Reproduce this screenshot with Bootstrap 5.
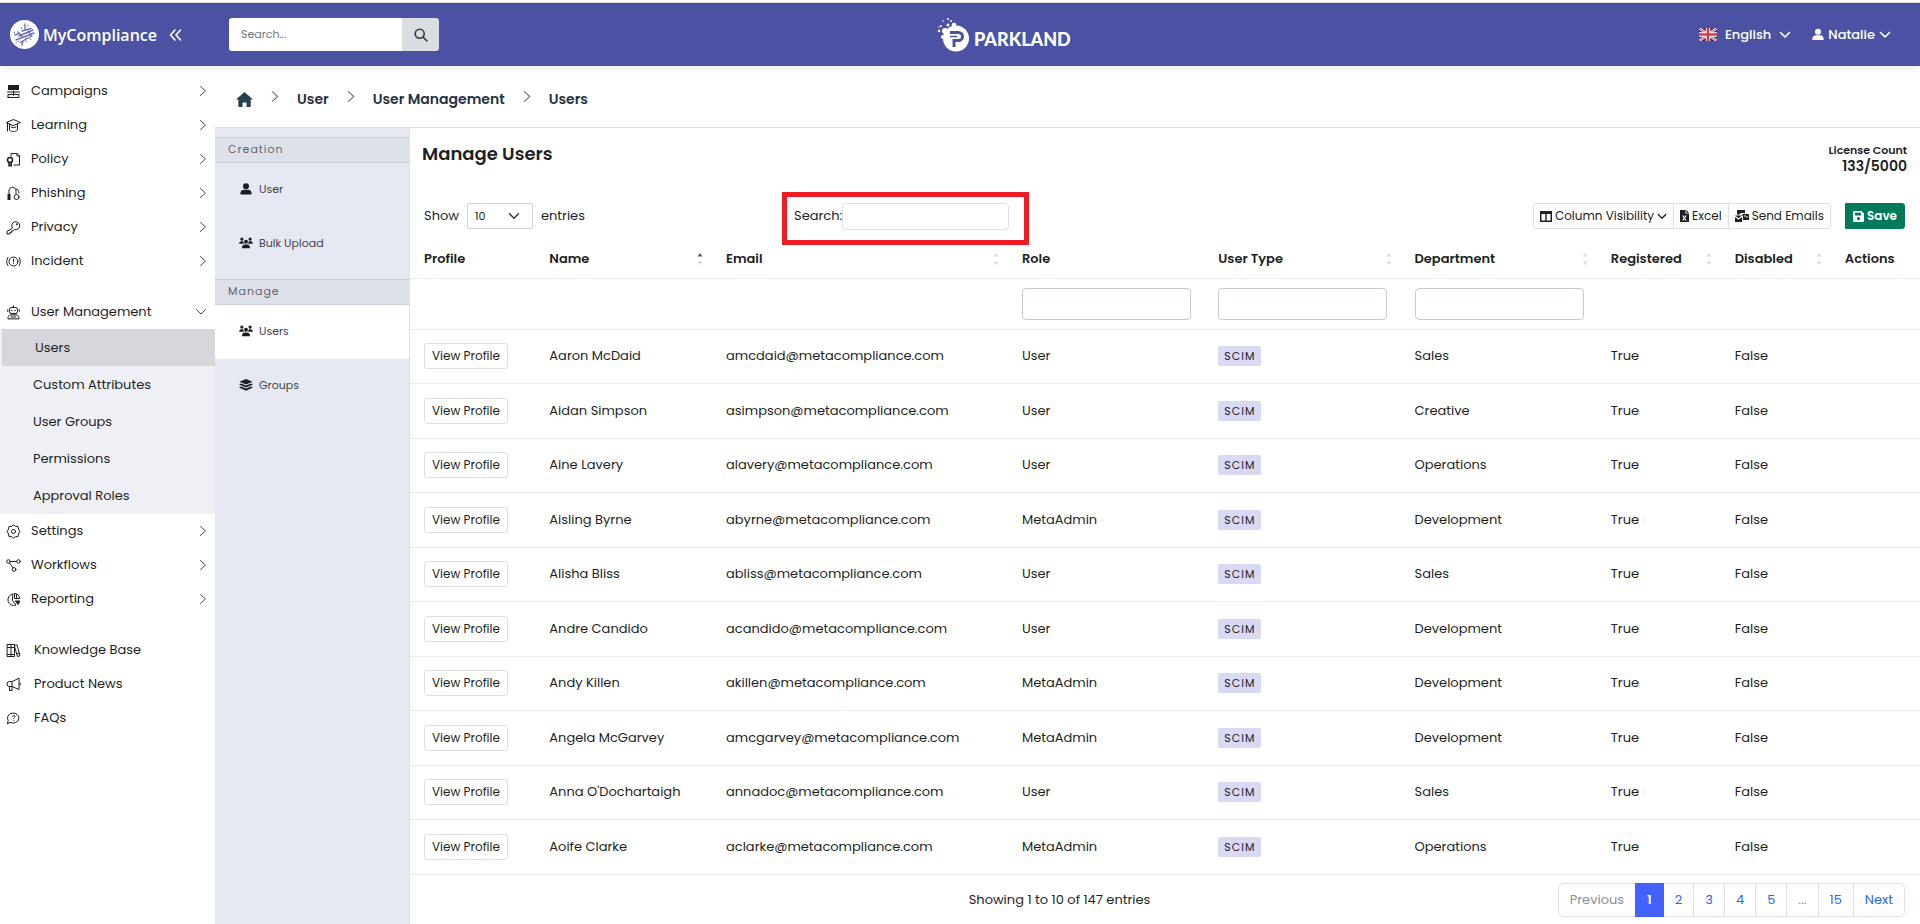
<!DOCTYPE html>
<html lang="en">
<head>
<meta charset="utf-8">
<meta name="viewport" content="width=device-width, initial-scale=1">
<title>Manage Users</title>
<link href="https://cdn.jsdelivr.net/npm/bootstrap@5.3.0/dist/css/bootstrap.min.css" rel="stylesheet">
<style>
body{font-family:Poppins,Inter,"Open Sans",sans-serif;font-size:13px;line-height:20px;color:#1d1f24;background:#fff;border-top:2px solid #fff}
a{color:inherit;text-decoration:none}
svg{display:block;flex:none}
.ln{fill:none;stroke:currentColor;stroke-linecap:round;stroke-linejoin:round}
.topbar{display:grid;grid-template-columns:48.8% auto 1fr;height:64px;background:#4c52a3;border-top:1px solid #dadada;color:#fff;box-shadow:0 2px 8px rgba(0,0,0,.08);position:relative}
.brandname{font-family:"Open Sans",sans-serif;font-size:16px;font-weight:600}
.tophalf{padding-left:10px}
.brandbox{width:219px}
.swirl{color:#6b70b5}
.topsearch{width:210px}
.topsearch .form-control{height:33px;font-size:11px;border:0;padding:0 12px;border-radius:3px}
.topsearch .form-control::placeholder{color:#707680}
.topsearch .btn{height:33px;width:37px;padding:0 12px;background:#dadde1;border:0;border-radius:3px;color:#343a45}
.parkland{font-family:Lato,sans-serif;font-weight:900;font-size:18px}
.topmenu{padding-right:29px;gap:21px}
.topmenu button{border:0;background:none;color:#fff;padding:0;font-weight:500}
.side{width:215px;flex:none;padding-top:8px}
.side a{display:flex;align-items:center;height:34px;padding:0 8px 0 6px}
.side a svg:first-child{width:15px;height:15px;margin-right:10px}
.side .chev{margin-left:auto;color:#4a4f56}
.side .help svg:first-child{margin-right:13px}
.side .subnav{background:#eff0f6}
.side .subnav a{height:37px;padding-left:33px}
.side .subnav a.on{background:#d6d7dd;margin-left:2px}
.gap-above{margin-top:17px}
.crumbs{height:62px;border-bottom:1px solid #dde1ea;padding:5px 0 0 21px;font-size:14px;font-weight:600;color:#26323f}
.crumbs svg.chev{color:#6b7380;margin:0 17px 6px}
.panel{width:195px;flex:none;background:#e6e9f2;border-right:1px solid #dde1ea;padding-top:9px;font-size:11px;color:#3c4148}
.panel h2{margin:0;height:26px;padding:0 13px;font-size:11px;font-weight:400;line-height:22px;letter-spacing:1px;color:#62676e;background:#dde1ea;border:solid #cbd0d8;border-width:1px 0}
.panel a{display:flex;align-items:center;gap:6px;height:54px;padding:0 0 2px 24px}
.panel a svg{color:#1b1d21}
.panel a.on{background:#fff}
.panel .grp{height:116px}
.mainhead{padding:14px 13px 0 12px}
.headline{font-size:18px;font-weight:600;line-height:24px;margin:0}
.licence{font-weight:600;font-size:14px;line-height:16px}
.licence small{font-size:11px;line-height:16px;display:block}
.tools{display:grid;grid-template-columns:372px 1fr auto;align-items:center;height:53px;margin-top:18px}
.tools>.shown,.tools>.actions{padding:0 15px 5px 14px}
.tools .form-select{width:66px;height:26px;font-size:11px;padding:0 7px;border-color:#cfd3dc;border-radius:3px;background-size:12px;background-position:right 12px center}
.marked{border:5px solid #ee1c25;width:247px;height:53px;padding:0 0 5px 7px}
.marked .form-control{width:167px;height:27px;border-color:#dcdfe6;border-radius:4px}
.tools .btn{height:26px;font-size:12px;line-height:16px;padding:0 7px;border:1px solid #dcdfe4;color:#1d1f24;border-radius:3px;display:flex;align-items:center;gap:3px}
.tools .btn-group .btn{padding:0 6px}
.tools .btn.save{background:#007a5a;border-color:#007a5a;color:#fff;font-weight:600;border-radius:0 3px 3px 0;margin-left:14px}
.users{table-layout:fixed;margin:0;color:#1d1f24;--bs-table-bg:transparent;--bs-table-color:#1d1f24}
.users th,.users td{padding:0 0 0 14px;vertical-align:middle;border-bottom:1px solid #ebebee;white-space:nowrap}
.users th{font-weight:600;position:relative}
.users thead tr:first-child{height:33px}
.users thead tr:first-child th{padding-bottom:4px}
.users thead tr+tr{height:51px}
.users tbody tr{height:54px}
.users tbody tr:nth-child(even){height:55px}
.users .form-control{width:169px;height:32px;border-color:#c7c8d2;border-radius:4px}
.users .btn{font-size:12px;line-height:16px;height:26px;padding:0 7px;border:1px solid #dcdfe4;border-radius:3px;color:#1d1f24}
.sorter{position:absolute;right:9px;top:8px;color:#dcdcde}
.tagged{background:#d9d9f3;color:#1f2130;font-size:11px;letter-spacing:1px;line-height:20px;height:20px;padding:0 6px;border-radius:2px;display:inline-block}
.foot{padding:8px 15px 8px 37%}
.pagination{--bs-pagination-color:#2b66f0;margin:0}
.page-link{font-size:13px;line-height:20px;padding:6px 11px;border-color:#dce1ea}
.page-item.active .page-link{background:#4361ff;border-color:#4361ff;font-weight:600;padding:6px 11px}
.page-item.disabled .page-link{background:#fff;color:#8d9094;border-color:#dce1ea}
</style>
</head>
<body>
<svg width="0" height="0" class="position-absolute" aria-hidden="true">
<symbol id="right" viewBox="0 0 8 12"><path class="ln" d="M1.500 1.500 6.500 6 1.500 10.500"/></symbol>
<symbol id="down" viewBox="0 0 12 8"><path class="ln" d="M1.500 1.500 6 6 10.500 1.500" stroke-width="1.600"/></symbol>
<symbol id="downthin" viewBox="0 0 12 8"><path class="ln" d="M1.500 1.500 6 6 10.500 1.500"/></symbol>
<symbol id="sort" viewBox="0 0 6 12"><path fill="currentColor" d="M3 0 5.500 3.500H.500zM3 12 5.500 8.500H.500z"/></symbol>
<symbol id="sortup" viewBox="0 0 6 12"><path fill="#5d6066" d="M3 0 5.500 3.500H.500z"/><path fill="currentColor" d="M3 12 5.500 8.500H.500z"/></symbol>
<symbol id="person" viewBox="0 0 14 14"><circle cx="7" cy="3.700" r="3.500" fill="currentColor"/><path fill="currentColor" d="M.500 13.500v-1.700C.500 9.500 2.300 8 4.500 8h5c2.200 0 4 1.500 4 3.800v1.700z"/></symbol>
<symbol id="people" viewBox="0 0 16 14"><g fill="currentColor"><circle cx="3.200" cy="2.400" r="1.900"/><circle cx="12.800" cy="2.400" r="1.900"/><circle cx="8" cy="5.500" r="2.300"/><path d="M0 8c0-2 1-3 2.600-3h1.800l.6.300C4.800 6.500 5.300 7.400 6 8zM16 8c0-2-1-3-2.600-3h-1.800l-.6.300c.2 1.200-.3 2.100-1 2.700zM3.300 13c0-2.600 1.300-4.200 3.200-4.200h3c1.900 0 3.200 1.600 3.200 4.200z"/></g></symbol>
</svg>

<header class="topbar">
  <div class="tophalf d-flex align-items-center">
    <div class="brandbox d-flex align-items-center">
      <svg class="swirl" width="29" height="29" viewBox="0 0 29 29"><circle cx="14.500" cy="14.500" r="14.500" fill="#fff"/><path class="ln" stroke-width="1.400" d="M15 4v6M12 11l9-2.500M9 16l14-6M6 20l18-7M10 22.500 22 16M8 12l4 4.500M18 11l3 5M13 21l-1 4M5 15l3-1"/><path class="ln" d="M16 18v5M20 19l2 2M11 8l2 2M6 23l3-2M4.500 12v1M18 5v1" stroke-dasharray="1 2"/></svg>
      <span class="brandname ms-1">MyCompliance</span>
      <a href="#" class="ms-2 ps-1" aria-label="Collapse menu"><svg width="13" height="12" viewBox="0 0 13 12"><path class="ln" stroke-width="1.600" d="M6 1 1.500 6 6 11M11.500 1 7 6l4.500 5"/></svg></a>
    </div>
    <form class="input-group topsearch">
      <input class="form-control" type="search" placeholder="Search..." aria-label="Search">
      <button class="btn" type="button" aria-label="Run search"><svg width="14" height="14" viewBox="0 0 14 14"><circle class="ln" cx="5.700" cy="5.700" r="4.500" stroke-width="1.600"/><path class="ln" stroke-width="1.600" d="m9 9 4 4"/></svg></button>
    </form>
  </div>
  <a href="#" class="d-flex align-items-center text-white">
    <svg width="33" height="36" viewBox="0 0 33 36"><circle cx="19" cy="21.500" r="13" fill="#fff"/><path d="M13 15.500h8.500a4 4 0 0 1 0 8H17V30" fill="none" stroke="#4c52a3" stroke-width="3"/><path d="M13 19.500h7" stroke="#4c52a3" stroke-width="1.500"/><g fill="#fff"><circle cx="8" cy="14" r="3"/><circle cx="17" cy="8" r="2.300"/><circle cx="11" cy="8" r="1.500"/><circle cx="6" cy="20" r="2"/><circle cx="2" cy="14" r="1.300"/><circle cx="4" cy="9" r="1"/><circle cx="11" cy="2" r="1"/><circle cx="14" cy="4" r="1"/><circle cx="6" cy="4" r=".8"/><circle cx="2" cy="10" r=".7"/></g></svg>
    <span class="parkland ms-1 pt-2">PARKLAND</span>
  </a>
  <div class="topmenu d-flex align-items-center justify-content-end">
    <button type="button" class="d-flex align-items-center"><svg width="18" height="13" viewBox="0 0 18 13" class="me-2"><path fill="#27366f" d="M0 0h18v13H0z"/><path stroke="#fff" stroke-width="2.600" d="m0 0 18 13M18 0 0 13"/><path stroke="#d7263d" d="m0 0 18 13M18 0 0 13"/><path stroke="#fff" stroke-width="4.500" d="M9 0v13M0 6.500h18"/><path stroke="#d7384c" stroke-width="2.600" d="M9 0v13M0 6.500h18"/></svg>English<svg width="12" height="8" class="ms-2"><use href="#down"/></svg></button>
    <button type="button" class="d-flex align-items-center"><svg width="12" height="13" class="me-1"><use href="#person"/></svg>Natalie<svg width="12" height="8" class="ms-1"><use href="#down"/></svg></button>
  </div>
</header>

<div class="d-flex align-items-stretch">
  <nav class="side" aria-label="Main menu">
    <a href="#"><svg viewBox="0 0 15 15"><path fill="currentColor" d="M2 1h11v5H2z"/><path class="ln" d="M1.500 8h12M2 13.500h11v-3H9.500M2 13.500v-3h3.500M7.500 7v4m-1.500-1 1.500 1.500L9 10"/></svg>Campaigns<svg class="chev" width="8" height="12"><use href="#right"/></svg></a>
    <a href="#"><svg viewBox="0 0 15 15"><path class="ln" d="m.5 4.500 7-3 7 3-7 3zM3.500 6v6c2 2 6 2 8 0V6M1.500 5v8M5 9c1.500 1 3.500 1 5 0"/></svg>Learning<svg class="chev" width="8" height="12"><use href="#right"/></svg></a>
    <a href="#"><svg viewBox="0 0 15 15"><path class="ln" d="M5 4V1.500h6l2.500 2.500v9H8M11 1.500V4h2.500"/><circle class="ln" cx="4" cy="8" r="2.500" stroke-width="1.500"/><path class="ln" stroke-width="1.500" d="M3 10.500V14l1-.8 1.200.8v-3.500"/></svg>Policy<svg class="chev" width="8" height="12"><use href="#right"/></svg></a>
    <a href="#"><svg viewBox="0 0 15 15"><path class="ln" d="M3 9V5c0-5 7-5 7 0v3"/><path fill="currentColor" d="M1.500 8h3v6h-3z"/><circle class="ln" cx="10.500" cy="11" r="2.500"/><path class="ln" d="M10 3c2 0 3 2 3 4"/></svg>Phishing<svg class="chev" width="8" height="12"><use href="#right"/></svg></a>
    <a href="#"><svg viewBox="0 0 15 15"><path class="ln" d="M6.300 7.800a4 4 0 1 1 2.200 1.700L7 11H5.500v1.500H4V14H1v-2.300z"/><circle cx="10.800" cy="4.200" r="1" fill="currentColor"/></svg>Privacy<svg class="chev" width="8" height="12"><use href="#right"/></svg></a>
    <a href="#"><svg viewBox="0 0 15 15"><circle class="ln" cx="7.500" cy="7.500" r="4.500"/><path class="ln" d="M7.500 5.200v2.600M7.500 9.500v.2M1.800 3.500c-1.500 2-1.500 6 0 8M13.200 3.500c1.500 2 1.500 6 0 8"/></svg>Incident<svg class="chev" width="8" height="12"><use href="#right"/></svg></a>
    <a href="#" class="gap-above"><svg viewBox="0 0 15 15"><rect class="ln" x="3.500" y="2.500" width="8" height="6" rx="2"/><path class="ln" d="M7.500.800v1.500M1.800 4.500v2M13.200 4.500v2M5.500 5.500h.500M9 5.500h.500M5 8.800h5M2 13.500c0-3 1-3.500 3-3.500h5c2 0 3 .5 3 3.500zM5 12h5"/></svg>User Management<svg class="chev" width="12" height="8"><use href="#downthin"/></svg></a>
    <div class="subnav">
      <a href="#" class="on" aria-current="page">Users</a>
      <a href="#">Custom Attributes</a>
      <a href="#">User Groups</a>
      <a href="#">Permissions</a>
      <a href="#">Approval Roles</a>
    </div>
    <a href="#"><svg viewBox="0 0 15 15"><path class="ln" d="m7.500 1 2 1.300 2.500.2.500 2.500 1.300 2.500-1.300 2.500-.5 2.500-2.500.2-2 1.300-2-1.300-2.500-.2-.5-2.500-1.300-2.500L2.500 5 3 2.500l2.500-.2z"/><circle class="ln" cx="7.500" cy="7.500" r="2"/></svg>Settings<svg class="chev" width="8" height="12"><use href="#right"/></svg></a>
    <a href="#"><svg viewBox="0 0 15 15"><circle class="ln" cx="2.500" cy="3.500" r="1.800"/><circle class="ln" cx="12.500" cy="3.500" r="1.800"/><circle class="ln" cx="8" cy="11.500" r="1.900"/><path class="ln" d="M4.500 3.500h6M3.500 5 7 9.800"/></svg>Workflows<svg class="chev" width="8" height="12"><use href="#right"/></svg></a>
    <a href="#"><svg viewBox="0 0 15 15"><path class="ln" d="M6.500 2a5.800 5.800 0 1 0 3.500 11L6.500 8.500zM8.500 1.500V6.500h5c0-3-2-5-5-5zM10.500 2.500v4"/><path fill="currentColor" d="M8.500 8.500H14c0 2-1 3.500-2 4.500z"/></svg>Reporting<svg class="chev" width="8" height="12"><use href="#right"/></svg></a>
    <div class="help gap-above">
      <a href="#"><svg viewBox="0 0 15 15"><path class="ln" d="M1.500 1.500h7v12h-7zM5 1.500v12M1.500 4.500h7M1.500 11.500h7M8.500 2.500l2.500-.7 3 11-2.500.7-3-10M10.500 11l3-.8"/></svg>Knowledge Base</a>
      <a href="#"><svg viewBox="0 0 15 15"><path class="ln" d="M6 4.500H3.500a2.500 2.500 0 0 0 0 5H6l7 3V1.500zM6 4.500v5M3.500 9.500v4h2.500v-4M14.200 6v2"/></svg>Product News</a>
      <a href="#"><svg viewBox="0 0 15 15"><path class="ln" d="M1.500 12.500 2.200 9.500a5.700 5 0 1 1 2.300 2z"/><path class="ln" d="M6.500 5.500c.3-1.600 2.700-1.300 2.500.2-.1.800-1 .9-1.200 1.600M7.800 9.200v.1"/></svg>FAQs</a>
    </div>
  </nav>

  <div class="flex-grow-1 d-flex flex-column">
    <nav class="crumbs d-flex align-items-center" aria-label="Breadcrumb">
      <a href="#" aria-label="Home"><svg width="17" height="15" viewBox="0 0 17 15"><path fill="#26404d" d="M8.500 0 17 7.500h-2.300V14q0 1-1 1H10.500v-4.500h-4V15H3.300q-1 0-1-1V7.500H0z"/></svg></a>
      <svg class="chev" width="10" height="13"><use href="#right"/></svg><a href="#">User</a>
      <svg class="chev" width="10" height="13"><use href="#right"/></svg><a href="#">User Management</a>
      <svg class="chev" width="10" height="13"><use href="#right"/></svg><span>Users</span>
    </nav>
    <div class="d-flex flex-grow-1">
      <aside class="panel">
        <h2>Creation</h2>
        <div class="grp">
          <a href="#"><svg width="14" height="12"><use href="#person"/></svg>User</a>
          <a href="#"><svg width="14" height="12"><use href="#people"/></svg>Bulk Upload</a>
        </div>
        <h2>Manage</h2>
        <a href="#" class="on"><svg width="14" height="12"><use href="#people"/></svg>Users</a>
        <a href="#"><svg width="14" height="12" viewBox="0 0 14 12"><path fill="currentColor" d="m7 0 6.500 2.800L7 5.600.5 2.800zM.5 5l1.500-.6 5 2 5-2 1.500.6v.800L7 8.600.5 5.800zM.5 8l1.500-.6 5 2 5-2 1.500.6v.800L7 11.800.5 8.800z"/></svg>Groups</a>
      </aside>
      <main class="flex-grow-1">
        <div class="mainhead d-flex justify-content-between">
          <h1 class="headline">Manage Users</h1>
          <div class="licence text-end"><small>License Count</small>133/5000</div>
        </div>
        <div class="tools">
          <label class="shown d-flex align-items-center gap-2">Show <select class="form-select"><option>10</option><option>25</option><option>50</option></select> entries</label>
          <label class="marked d-flex align-items-center">Search:<input class="form-control" type="search"></label>
          <div class="actions d-flex">
            <div class="btn-group">
              <button type="button" class="btn"><svg width="12" height="11" viewBox="0 0 12 11"><path fill="currentColor" fill-rule="evenodd" d="M0 0h12v11H0zM1.500 3v6.500h3.800V3zM6.700 3v6.500h3.800V3z"/></svg>Column Visibility<svg width="10" height="7"><use href="#down"/></svg></button>
              <button type="button" class="btn"><svg width="9" height="12" viewBox="0 0 9 12"><path fill="currentColor" d="M0 0h5.500v3.500H9V12H0zM6.300 0 9 2.700H6.300z"/><path d="m2.700 5.500 3.400 5m0-5-3.400 5" stroke="#fff" stroke-width="1.200"/></svg>Excel</button>
              <button type="button" class="btn"><svg width="14" height="12" viewBox="0 0 14 12"><path fill="currentColor" d="M2 0h8v3H6L4.500 4.500H2zM0 5.500l3.500 2.800L7 5.500H0zM0 7l3.500 2.700L7 7v5H0zM7.500 4H13q1 0 1 1v5H8V5.500H6.500z"/><path d="M9 6h2m1 0v2" stroke="#fff"/></svg>Send Emails</button>
            </div>
            <button type="button" class="btn save"><svg width="11" height="11" viewBox="0 0 11 11"><path fill="#fff" fill-rule="evenodd" d="M0 1q0-1 1-1h7.500L11 2.500V10q0 1-1 1H1q-1 0-1-1zM2 1.800v2.700h6V1.800zM5.500 6a1.600 1.600 0 1 0 .01 0z"/></svg>Save</button>
          </div>
        </div>
        <table class="table users">
          <colgroup><col style="width:8.300%"><col style="width:11.700%"><col style="width:19.600%"><col style="width:13%"><col style="width:13%"><col style="width:13%"><col style="width:8.200%"><col style="width:7.300%"><col style="width:5.900%"></colgroup>
          <thead>
            <tr><th scope="col">Profile</th><th scope="col">Name<svg class="sorter" width="6" height="12"><use href="#sortup"/></svg></th><th scope="col">Email<svg class="sorter" width="6" height="12"><use href="#sort"/></svg></th><th scope="col">Role</th><th scope="col">User Type<svg class="sorter" width="6" height="12"><use href="#sort"/></svg></th><th scope="col">Department<svg class="sorter" width="6" height="12"><use href="#sort"/></svg></th><th scope="col">Registered<svg class="sorter" width="6" height="12"><use href="#sort"/></svg></th><th scope="col">Disabled<svg class="sorter" width="6" height="12"><use href="#sort"/></svg></th><th scope="col">Actions</th></tr>
            <tr><td></td><td></td><td></td><td><input class="form-control" type="text" aria-label="Filter by role"></td><td><input class="form-control" type="text" aria-label="Filter by user type"></td><td><input class="form-control" type="text" aria-label="Filter by department"></td><td></td><td></td><td></td></tr>
          </thead>
          <tbody>
            <tr><td><button type="button" class="btn">View Profile</button></td><td>Aaron McDaid</td><td>amcdaid@metacompliance.com</td><td>User</td><td><span class="tagged">SCIM</span></td><td>Sales</td><td>True</td><td>False</td><td></td></tr>
            <tr><td><button type="button" class="btn">View Profile</button></td><td>Aidan Simpson</td><td>asimpson@metacompliance.com</td><td>User</td><td><span class="tagged">SCIM</span></td><td>Creative</td><td>True</td><td>False</td><td></td></tr>
            <tr><td><button type="button" class="btn">View Profile</button></td><td>Aine Lavery</td><td>alavery@metacompliance.com</td><td>User</td><td><span class="tagged">SCIM</span></td><td>Operations</td><td>True</td><td>False</td><td></td></tr>
            <tr><td><button type="button" class="btn">View Profile</button></td><td>Aisling Byrne</td><td>abyrne@metacompliance.com</td><td>MetaAdmin</td><td><span class="tagged">SCIM</span></td><td>Development</td><td>True</td><td>False</td><td></td></tr>
            <tr><td><button type="button" class="btn">View Profile</button></td><td>Alisha Bliss</td><td>abliss@metacompliance.com</td><td>User</td><td><span class="tagged">SCIM</span></td><td>Sales</td><td>True</td><td>False</td><td></td></tr>
            <tr><td><button type="button" class="btn">View Profile</button></td><td>Andre Candido</td><td>acandido@metacompliance.com</td><td>User</td><td><span class="tagged">SCIM</span></td><td>Development</td><td>True</td><td>False</td><td></td></tr>
            <tr><td><button type="button" class="btn">View Profile</button></td><td>Andy Killen</td><td>akillen@metacompliance.com</td><td>MetaAdmin</td><td><span class="tagged">SCIM</span></td><td>Development</td><td>True</td><td>False</td><td></td></tr>
            <tr><td><button type="button" class="btn">View Profile</button></td><td>Angela McGarvey</td><td>amcgarvey@metacompliance.com</td><td>MetaAdmin</td><td><span class="tagged">SCIM</span></td><td>Development</td><td>True</td><td>False</td><td></td></tr>
            <tr><td><button type="button" class="btn">View Profile</button></td><td>Anna O'Dochartaigh</td><td>annadoc@metacompliance.com</td><td>User</td><td><span class="tagged">SCIM</span></td><td>Sales</td><td>True</td><td>False</td><td></td></tr>
            <tr><td><button type="button" class="btn">View Profile</button></td><td>Aoife Clarke</td><td>aclarke@metacompliance.com</td><td>MetaAdmin</td><td><span class="tagged">SCIM</span></td><td>Operations</td><td>True</td><td>False</td><td></td></tr>
          </tbody>
        </table>
        <div class="foot d-flex justify-content-between align-items-center">
          <span>Showing 1 to 10 of 147 entries</span>
          <nav aria-label="Table pages"><ul class="pagination">
            <li class="page-item disabled"><a class="page-link" href="#">Previous</a></li>
            <li class="page-item active"><a class="page-link" href="#">1</a></li>
            <li class="page-item"><a class="page-link" href="#">2</a></li>
            <li class="page-item"><a class="page-link" href="#">3</a></li>
            <li class="page-item"><a class="page-link" href="#">4</a></li>
            <li class="page-item"><a class="page-link" href="#">5</a></li>
            <li class="page-item disabled"><a class="page-link" href="#">...</a></li>
            <li class="page-item"><a class="page-link" href="#">15</a></li>
            <li class="page-item"><a class="page-link" href="#">Next</a></li>
          </ul></nav>
        </div>
      </main>
    </div>
  </div>
</div>
<script src="https://cdn.jsdelivr.net/npm/bootstrap@5.3.0/dist/js/bootstrap.bundle.min.js"></script>
</body>
</html>
